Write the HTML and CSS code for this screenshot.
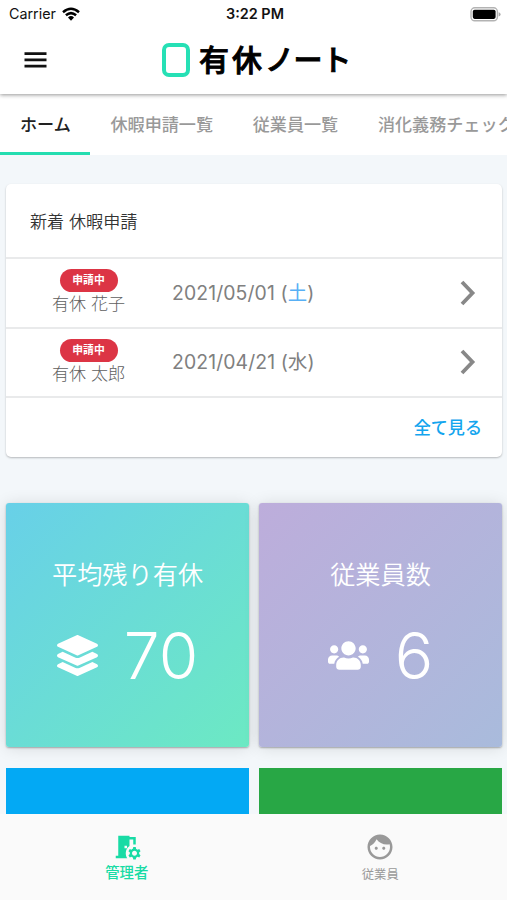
FILE: index.html
```html
<!DOCTYPE html>
<html lang="ja">
<head>
<meta charset="utf-8">
<meta name="viewport" content="width=device-width, initial-scale=1">
<title>有休ノート</title>
<link rel="stylesheet" href="styles.css">
</head>
<body>
<div class="app">
  <header class="header">
    <div class="status">
      <div class="carrier">
        <span>Carrier</span>
        <svg class="wifi" viewBox="0 0 18 14" fill="none" stroke="#000" stroke-width="2.5"><path d="M1 5.2Q9-1.6 17 5.2M3.9 8.3Q9 3.9 14.1 8.3"/><path d="M6 10.4Q9 7.8 12 10.4L9 13.8z" fill="#000" stroke="none"/></svg>
      </div>
      <time class="clock">3:22 PM</time>
      <svg class="battery" viewBox="0 0 31 15"><rect x="1" y=".8" width="26.4" height="13" rx="3.8" fill="#fff" stroke="#b3b3b3" stroke-width="1.4"/><rect x="2.8" y="2.7" width="22.8" height="9.2" rx="1.8"/><path d="M28.6 5.2q2 .6 2 2.2t-2 2.2z" fill="#aaa"/></svg>
    </div>
    <div class="titlebar">
      <svg class="menu" viewBox="0 0 23 16"><path d="M.5 1.6h22M.5 7.9h22M.5 14.1h22"/></svg>
      <h1 class="brand"><span class="mark"></span><span class="name">有休<span class="kana">ノート</span></span></h1>
    </div>
  </header>
  <nav class="tabs">
    <a class="tab active">ホーム</a>
    <a class="tab">休暇申請一覧</a>
    <a class="tab">従業員一覧</a>
    <a class="tab">消化義務チェック</a>
  </nav>
  <main class="content">
    <section class="card">
      <h2 class="card-title">新着 休暇申請</h2>
      <div class="request">
        <div class="person"><span class="badge">申請中</span><span class="who">有休 花子</span></div>
        <div class="date">2021/05/01 (<span class="sat">土</span>)</div>
        <svg class="chevron" viewBox="0 0 16 26"><path d="M2 2l10.5 11L2 24"/></svg>
      </div>
      <div class="request">
        <div class="person"><span class="badge">申請中</span><span class="who">有休 太郎</span></div>
        <div class="date">2021/04/21 (水)</div>
        <svg class="chevron" viewBox="0 0 16 26"><path d="M2 2l10.5 11L2 24"/></svg>
      </div>
      <div class="card-footer"><a class="all">全て見る</a></div>
    </section>
    <section class="tiles">
      <article class="tile teal">
        <h3>平均残り有休</h3>
        <div class="stat">
          <svg viewBox="0 0 512 512"><path d="M12.41 148.02l232.94 105.67c6.8 3.09 14.49 3.09 21.29 0l232.94-105.67c16.55-7.51 16.55-32.52 0-40.03L266.65 2.31a25.607 25.607 0 0 0-21.29 0L12.41 107.98c-16.55 7.51-16.55 32.53 0 40.04zm487.18 88.28l-58.09-26.33-161.64 73.27c-7.56 3.43-15.59 5.17-23.86 5.17s-16.29-1.74-23.86-5.17L70.51 209.97l-58.1 26.33c-16.55 7.5-16.55 32.5 0 40l232.94 105.59c6.8 3.08 14.49 3.08 21.29 0L499.59 276.3c16.55-7.5 16.55-32.5 0-40zm0 127.8l-57.87-26.23-161.86 73.37c-7.56 3.43-15.59 5.17-23.86 5.17s-16.29-1.74-23.86-5.17L70.29 337.87 12.41 364.1c-16.55 7.5-16.55 32.5 0 40l232.94 105.59c6.8 3.08 14.49 3.08 21.29 0L499.59 404.1c16.55-7.5 16.55-32.5 0-40z"/></svg>
          <span>70</span>
        </div>
      </article>
      <article class="tile violet">
        <h3>従業員数</h3>
        <div class="stat">
          <svg viewBox="0 0 640 512"><path d="M96 224c35.3 0 64-28.7 64-64s-28.7-64-64-64-64 28.7-64 64 28.7 64 64 64zm448 0c35.3 0 64-28.7 64-64s-28.7-64-64-64-64 28.7-64 64 28.7 64 64 64zm32 32h-64c-17.6 0-33.5 7.1-45.1 18.6 40.3 22.1 68.9 62 75.1 109.4h66c17.7 0 32-14.3 32-32v-32c0-35.3-28.7-64-64-64zm-256 0c61.9 0 112-50.1 112-112S381.9 32 320 32 208 82.1 208 144s50.1 112 112 112zm76.8 32h-8.3c-20.8 10-43.9 16-68.5 16s-47.6-6-68.5-16h-8.3C179.6 288 128 339.6 128 403.2V432c0 26.5 21.5 48 48 48h288c26.5 0 48-21.5 48-48v-28.8c0-63.6-51.6-115.2-115.2-115.2zm-223.7-13.4C161.5 263.1 145.6 256 128 256H64c-35.3 0-64 28.7-64 64v32c0 17.7 14.3 32 32 32h65.9c6.3-47.4 34.9-87.3 75.2-109.4z"/></svg>
          <span>6</span>
        </div>
      </article>
      <article class="tile blue"></article>
      <article class="tile green"></article>
    </section>
  </main>
  <footer class="bottom">
    <a class="dest current">
      <svg viewBox="0 0 24 24"><path d="M14 11.26V6h3v4h2V4h-5V3H5v16H3v2h9.26C11.47 19.87 11 18.49 11 17c0-2.38 1.19-4.47 3-5.74zM10 11h2v2h-2v-2z" fill-rule="evenodd"/><path d="M21.69 16.37l1.14-1-1-1.73-1.45.49c-.32-.27-.68-.48-1.08-.63L19 12h-2l-.3 1.49c-.4.15-.76.36-1.08.63l-1.45-.49-1 1.73 1.14 1c-.08.5-.08.76 0 1.26l-1.14 1 1 1.73 1.45-.49c.32.27.68.48 1.08.63L17 22h2l.3-1.49c.4-.15.76-.36 1.08-.63l1.45.49 1-1.73-1.14-1c.08-.51.08-.77 0-1.27zM18 19c-1.1 0-2-.9-2-2s.9-2 2-2 2 .9 2 2-.9 2-2 2z"/></svg>
      <span>管理者</span>
    </a>
    <a class="dest">
      <svg viewBox="0 0 24 24"><path d="M9 11.75c-.69 0-1.25.56-1.25 1.25s.56 1.25 1.25 1.25 1.25-.56 1.25-1.25-.56-1.25-1.25-1.25zm6 0c-.69 0-1.25.56-1.25 1.25s.56 1.25 1.25 1.25 1.25-.56 1.25-1.25-.56-1.25-1.25-1.25zM12 2C6.48 2 2 6.48 2 12s4.48 10 10 10 10-4.48 10-10S17.52 2 12 2zm0 18c-4.41 0-8-3.59-8-8 0-.29.02-.58.05-.86 2.36-1.05 4.23-2.98 5.21-5.37C11.07 8.33 14.05 10 17.42 10c.78 0 1.53-.09 2.25-.26.21.71.33 1.47.33 2.26 0 4.41-3.59 8-8 8z"/></svg>
      <span>従業員</span>
    </a>
  </footer>
</div>
</body>
</html>
```
FILE: styles.css
```css
* { box-sizing: border-box; }

body {
  margin: 0;
  font-family: Inter, "Noto Sans CJK JP", sans-serif;
  background: #f3f7fa;
  color: #333;
}

h1, h2, h3 { margin: 0; font-weight: 400; }

.app {
  display: flex;
  flex-direction: column;
  height: 900px;
  overflow: hidden;
}

.header {
  flex: none;
  height: 94px;
  background: #fff;
  box-shadow: 0 1px 4px rgba(0, 0, 0, .42);
  z-index: 1;
}

.status {
  display: grid;
  grid-template-columns: 1fr auto 1fr;
  align-items: center;
  height: 27px;
  padding: 0 6px 0 9px;
  color: #111;
  font-size: 14.3px;
  line-height: 28px;
}
.carrier { display: flex; align-items: center; gap: 6px; }
.wifi { width: 18px; height: 14px; }
.clock { font-weight: 600; font-size: 14.4px; }
.battery { width: 31px; height: 15px; justify-self: end; }

.titlebar {
  display: grid;
  grid-template-columns: 138px 1fr;
  align-items: center;
  height: 66px;
  padding-left: 24px;
}
.menu {
  width: 23px;
  height: 16px;
  stroke: #111;
  stroke-width: 2.6;
}
.brand { display: flex; align-items: center; gap: 9px; }
.mark {
  width: 28px;
  height: 34px;
  border: 4px solid #26e0b5;
  border-radius: 7px;
}
.name {
  padding-bottom: 3px;
  font: 500 30px/37px "Noto Sans CJK JP", sans-serif;
  letter-spacing: 3px;
  color: #000;
  white-space: nowrap;
  -webkit-text-stroke: .9px #000;
}
.kana { letter-spacing: -.4px; font-size: 29px; }

.tabs {
  display: flex;
  flex: none;
  height: 61px;
  overflow: hidden;
  background: #fff;
}
.tab {
  flex: none;
  padding: 0 19.7px 0 20px;
  font-size: 17.1px;
  font-weight: 500;
  line-height: 62px;
  color: #999;
}
.tab.active { color: #222; border-bottom: 3px solid #24ddb0; }

.content {
  flex: 1;
  min-height: 0;
  padding: 29px 5px 0 6px;
  overflow: hidden;
}

.card {
  height: 273px;
  border-radius: 5px;
  background: #fff;
  box-shadow: 0 1px 2px rgba(0, 0, 0, .25);
}
.card-title {
  height: 73px;
  padding-left: 24px;
  font-size: 17.1px;
  font-weight: 350;
  line-height: 75px;
}
.request {
  display: grid;
  grid-template-columns: 166px 1fr 16px;
  align-items: center;
  height: 69.5px;
  padding-right: 26px;
  border-top: 2px solid #e9eaeb;
  color: #808080;
}
.person {
  display: flex;
  flex-direction: column;
  align-items: center;
  padding-right: 1px;
}
.badge {
  width: 58px;
  height: 23px;
  border-radius: 12px;
  background: #dc3545;
  color: #fff;
  font-size: 10.8px;
  font-weight: 700;
  line-height: 24px;
  text-align: center;
}
.who { font-size: 17.1px; font-weight: 300; line-height: 24px; color: #606060; }
.date { padding-bottom: 3px; font-size: 19.4px; letter-spacing: .1px; }
.sat { color: #58b0f5; }
.chevron {
  width: 16px;
  height: 26px;
  fill: none;
  stroke: #888;
  stroke-width: 3.8;
}
.card-footer {
  height: 60px;
  padding-right: 20px;
  border-top: 2px solid #e9eaeb;
  text-align: right;
}
.all { font-size: 17.1px; font-weight: 500; line-height: 59px; color: #14a5ee; }

.tiles {
  display: grid;
  grid-template-columns: 243px 243px;
  grid-auto-rows: 244px;
  gap: 21px 10px;
  margin-top: 46px;
}
.tile { color: #fff; text-align: center; }
.teal, .violet {
  border-radius: 3px;
  box-shadow: 0 1px 2px rgba(0, 0, 0, .3), 0 1px 16px rgba(0, 0, 0, .12);
}
.teal { background: linear-gradient(135deg, #68d0e8, #6ce9c3); }
.violet { background: linear-gradient(135deg, #bdaddb, #a9bbdc); }
.blue { background: #03a9f4; }
.green { background: #28a745; }
.tile h3 {
  padding-top: 54px;
  font-size: 25.2px;
  font-weight: 350;
  line-height: 36px;
}
.stat {
  display: flex;
  justify-content: center;
  align-items: center;
  gap: 26px;
  height: 124px;
  font-size: 64px;
  font-weight: 300;
}
.stat svg { width: 41px; height: 41px; fill: #fff; }

.bottom {
  display: grid;
  grid-template-columns: 1fr 1fr;
  flex: none;
  height: 86px;
  background: #fafafa;
}
.dest {
  display: flex;
  flex-direction: column;
  align-items: center;
  padding-top: 18px;
  color: #999;
  font-size: 12.3px;
  line-height: 25px;
}
.dest svg { width: 30px; height: 30px; fill: currentColor; }
.dest.current { color: #18dba5; font-size: 14.4px; font-weight: 500; line-height: 22px; }
```
